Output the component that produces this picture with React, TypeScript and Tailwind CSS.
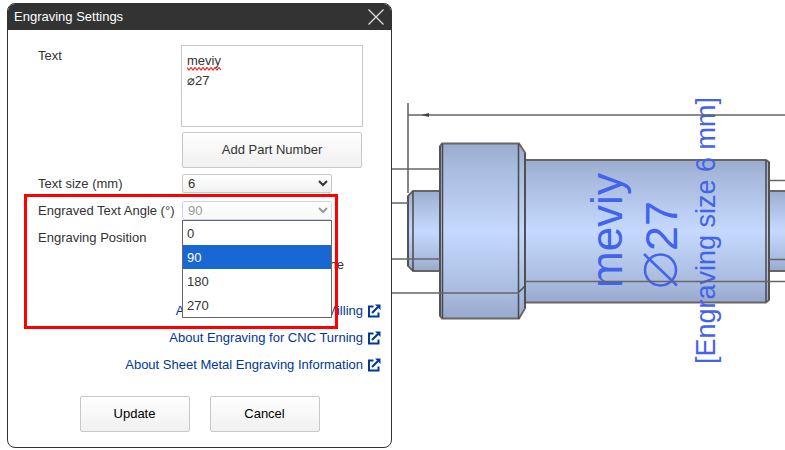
import React from "react";
import type { ReactNode } from "react";

function ExternalIcon() {
  return (
    <svg viewBox="0 0 14 14" className="h-3.5 w-3.5 shrink-0" fill="none" stroke="currentColor" strokeWidth="2" aria-hidden="true">
      <path d="M6.500 2.500H2v10h9.500V8.500" />
      <path d="M5 9L11 3" strokeWidth="2.200" />
      <path d="M8 .5h5.500v5.500z" fill="currentColor" stroke="none" />
    </svg>
  );
}

function HelpLink({ children }: { children: ReactNode }) {
  return (
    <a href="#help" className="flex items-center gap-1 text-[#003894]">
      {children}
      <ExternalIcon />
    </a>
  );
}

const buttonStyle =
  "rounded-xs border border-[#c8c8c8] bg-linear-to-b from-white to-[#f0f0f0]";

const angles = ["0", "90", "180", "270"];

function EngravingDialog() {
  return (
    <section
      role="dialog"
      aria-labelledby="title"
      className="relative mt-[3px] ml-[7px] w-[385px] shrink-0 self-start overflow-hidden rounded-lg border border-[#333] bg-white text-[#333]"
    >
      <header className="flex h-[26px] items-center justify-between bg-[#333] px-1.5 text-white">
        <h1 id="title">Engraving Settings</h1>
        <button type="button" aria-label="Close" className="text-[#ddd]">
          <svg viewBox="0 0 18 18" className="h-[18px] w-[18px]" stroke="currentColor" strokeWidth="1.3" aria-hidden="true">
            <path d="M1.500 1.500l15 15M16.500 1.500l-15 15" />
          </svg>
        </button>
      </header>

      <form className="pt-[15px] pb-[15px] pl-[30px]">
        <div className="grid grid-cols-[144px_180px] gap-y-[5px]">
          <label htmlFor="text" className="pt-px">Text</label>
          <div className="relative -ml-px h-[82px] w-[182px]">
            <textarea
              id="text"
              spellCheck={false}
              defaultValue={"meviy\n⌀27"}
              className="block h-full w-full resize-none border border-[#c8c8c8] p-[5px] leading-5 outline-none"
            />
            <svg className="absolute top-[22px] left-1.5 h-1 w-[34px]" fill="none" stroke="#f22" strokeWidth="1.2" aria-hidden="true">
              <path d="M0 .5l2 2.500 2-2.500 2 2.500 2-2.500 2 2.500 2-2.500 2 2.500 2-2.500 2 2.500 2-2.500 2 2.500 2-2.500 2 2.500 2-2.500 2 2.500 2-2.500 2 2.500" />
            </svg>
          </div>
          <button type="button" className={`${buttonStyle} col-start-2 h-9`}>
            Add Part Number
          </button>
        </div>

        <div className="mt-0.5 grid grid-cols-[144px_150px] auto-rows-[27px] items-center">
          <label htmlFor="size">Text size (mm)</label>
          <select id="size" defaultValue="6" className={`${buttonStyle} h-[19px] px-px`}>
            <option>6</option>
          </select>
          <label htmlFor="angle" className="whitespace-nowrap">Engraved Text Angle (°)</label>
          <div className="relative">
            <select
              id="angle"
              defaultValue="90"
              className="block h-[19px] w-full rounded-xs border border-[#ccd3f8] bg-linear-to-b from-white to-[#f8f8f8] px-px text-[#999]"
            >
              {angles.map((a) => <option key={a}>{a}</option>)}
            </select>
            <ul role="listbox" aria-label="Angle choices" className="absolute top-[19px] left-0 z-10 w-full border border-[#666] bg-white">
              {angles.map((a) => (
                <li
                  key={a}
                  role="option"
                  aria-selected={a === "90"}
                  className="flex h-6 items-center px-1 pt-0.5 aria-selected:bg-[#1967d2] aria-selected:text-white"
                >
                  {a}
                </li>
              ))}
            </ul>
          </div>
          <span>Engraving Position</span>
          <span />
          <span className="col-start-2 w-[162px] text-right whitespace-nowrap">Flip the side of the</span>
        </div>

        <nav className="mt-[23px] mr-2.5 flex flex-col items-end gap-[7px]">
          <HelpLink>About Engraving for CNC Milling</HelpLink>
          <HelpLink>About Engraving for CNC Turning</HelpLink>
          <HelpLink>About Sheet Metal Engraving Information</HelpLink>
        </nav>

        <div className="mt-[21px] flex justify-center gap-5 pr-[30px] text-black">
          <button type="button" className={`${buttonStyle} h-9 w-[110px]`}>Update</button>
          <button type="button" className={`${buttonStyle} h-9 w-[110px]`}>Cancel</button>
        </div>
      </form>

      <div aria-hidden="true" className="pointer-events-none absolute top-[190px] left-4 z-20 h-[135px] w-[314px] border-3 border-[#f00]" />
    </section>
  );
}

function ShaftDrawing() {
  return (
    <svg
      viewBox="392 0 393 450"
      preserveAspectRatio="xMinYMin slice"
      className="min-w-0 flex-1"
      role="img"
      aria-label="Engraved shaft, side view"
    >
      <defs>
        <linearGradient id="metal" x1="0" y1="0" x2="0" y2="1">
          <stop offset="0" stopColor="#9bacce" />
          <stop offset="0.15" stopColor="#a9bcdf" />
          <stop offset="0.5" stopColor="#c5d9fe" />
          <stop offset="0.85" stopColor="#a9bcdf" />
          <stop offset="1" stopColor="#98a9cb" />
        </linearGradient>
      </defs>
      <g fill="url(#metal)" stroke="#666" strokeWidth="1.800">
        <path d="M408 196l5-5h27v80h-27l-5-5z" />
        <path d="M440 146l2-2.500h77l6 9v156l-6 10h-77l-2-2.500z" />
        <path d="M525 160h241l3 2v138l-3 2.500H525z" />
        <path d="M769 191h20v80h-20z" />
      </g>
      <g stroke="#484848" strokeWidth="1.500" fill="none">
        <path d="M413 191v80M408 196v70M440 146v170M442.500 144v174M518.500 144v175M525 153v155M766 160v142M769 162v138" />
        <path d="M519 292l6-6" />
      </g>
      <g fill="#4263eb" className="font-['Liberation_Sans',Arial,sans-serif]">
        <text transform="translate(622 288) rotate(-90)" fontSize="44">meviy</text>
        <text transform="translate(677 251) rotate(-90)" fontSize="45">27</text>
        <text transform="translate(715 364) rotate(-90)" fontSize="27">[Engraving size 6 mm]</text>
      </g>
      <g stroke="#4263eb" strokeWidth="2.500" fill="none">
        <circle cx="660.500" cy="270" r="15.500" />
        <path d="M644 254l33 31.500" />
      </g>
      <g stroke="#666" strokeWidth="1.600" fill="none">
        <path d="M408 103v90M408 115h377" />
        <path d="M392 169h48M392 203h16M769 180.500h16" />
        <path d="M392 259h48M392 293h127M525 281.500h260M769 259.500h16" />
      </g>
      <path d="M421 115l8-2v4z" fill="#444" />
    </svg>
  );
}

export default function App() {
  return (
    <main className="flex min-h-screen bg-white font-['Liberation_Sans',Arial,sans-serif] text-[13px] leading-5">
      <EngravingDialog />
      <ShaftDrawing />
    </main>
  );
}
